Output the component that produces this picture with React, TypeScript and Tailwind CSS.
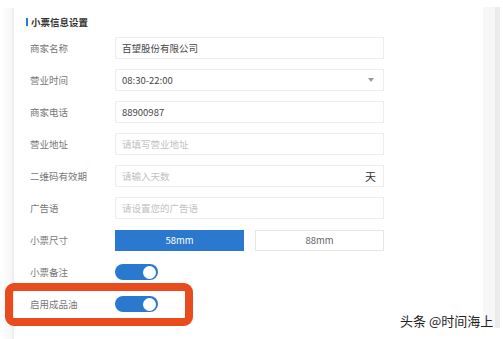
const FONT = "font-['Noto_Sans_CJK_SC','Noto_Sans',sans-serif]";

type Row =
  | { label: string; kind: "input"; value?: string; placeholder?: string; suffix?: string }
  | { label: string; kind: "select"; value: string }
  | { label: string; kind: "size" }
  | { label: string; kind: "toggle" };

const rows: Row[] = [
  { label: "商家名称", kind: "input", value: "百望股份有限公司" },
  { label: "营业时间", kind: "select", value: "08:30-22:00" },
  { label: "商家电话", kind: "input", value: "88900987" },
  { label: "营业地址", kind: "input", placeholder: "请填写营业地址" },
  { label: "二维码有效期", kind: "input", placeholder: "请输入天数", suffix: "天" },
  { label: "广告语", kind: "input", placeholder: "请设置您的广告语" },
  { label: "小票尺寸", kind: "size" },
  { label: "小票备注", kind: "toggle" },
  { label: "启用成品油", kind: "toggle" },
];

function Toggle() {
  return (
    <div className="flex h-[16px] w-[43px] items-center justify-end rounded-full bg-[#2b78cf] pr-[2px]">
      <div className="h-[13px] w-[13px] rounded-full bg-white" />
    </div>
  );
}

function Field({ row }: { row: Row }) {
  if (row.kind === "toggle") {
    return <Toggle />;
  }

  if (row.kind === "size") {
    return (
      <div className="flex w-[269px] gap-[11px]">
        <div className="flex h-[21px] w-[129px] items-center justify-center bg-[#2b78cf] text-[9.5px] text-white">
          58mm
        </div>
        <div className="flex h-[21px] w-[129px] items-center justify-center border border-[#e6e6e6] text-[9.5px] text-[#666]">
          88mm
        </div>
      </div>
    );
  }

  if (row.kind === "select") {
    return (
      <div className="flex h-[22px] w-[269px] items-center justify-between border border-[#ececec] pl-[6px] pr-[9px] text-[9.5px] text-[#444]">
        <span>{row.value}</span>
        <span className="h-0 w-0 border-x-[3px] border-t-[4px] border-x-transparent border-t-[#999]" />
      </div>
    );
  }

  return (
    <div className="flex h-[22px] w-[269px] items-center justify-between border border-[#ececec] pl-[6px] pr-[7px] text-[9.5px]">
      {row.value ? (
        <span className="text-[#444]">{row.value}</span>
      ) : (
        <span className="text-[#c2c2c2]">{row.placeholder}</span>
      )}
      {row.suffix ? <span className="text-[11px] text-[#333]">{row.suffix}</span> : null}
    </div>
  );
}

export default function App() {
  return (
    <div className={`relative flex h-[339px] w-[503px] overflow-hidden bg-white ${FONT}`}>
      {/* left panel edge */}
      <div className="mt-[8px] w-[14px] shrink-0 border-r-2 border-[#efefef] bg-gradient-to-r from-white to-[#f6f6f6]" />

      <div className="flex-1 pl-[12px]">
        <div className="mt-[15px] flex h-[14px] items-center gap-[3px]">
          <span className="h-[8px] w-[2px] bg-[#2b78cf]" />
          <span className="text-[9.5px] font-semibold text-[#333]">小票信息设置</span>
        </div>
        <div className="mt-[3px]">
          {rows.map((row) => (
            <div key={row.label} className="flex h-[32px] items-center">
              <span className="w-[89px] shrink-0 pl-[4px] text-[9.5px] text-[#777]">{row.label}</span>
              <Field row={row} />
            </div>
          ))}
        </div>
      </div>

      {/* scrollbar */}
      <div className="mr-[3px] mt-[7px] flex h-[321px] w-[17px] shrink-0">
        <div className="w-[12px] bg-[#f7f7f7]" />
        <div className="w-[5px] bg-[#ececec]" />
      </div>

      <div className="absolute left-[5px] top-[283px] h-[43px] w-[188px] rounded-[9px] border-[8px] border-[#e84b1d]" />

      <div className="absolute left-[400px] top-[312px] text-[13px] leading-[18px] text-[#222]">头条 @时间海上</div>
    </div>
  );
}
